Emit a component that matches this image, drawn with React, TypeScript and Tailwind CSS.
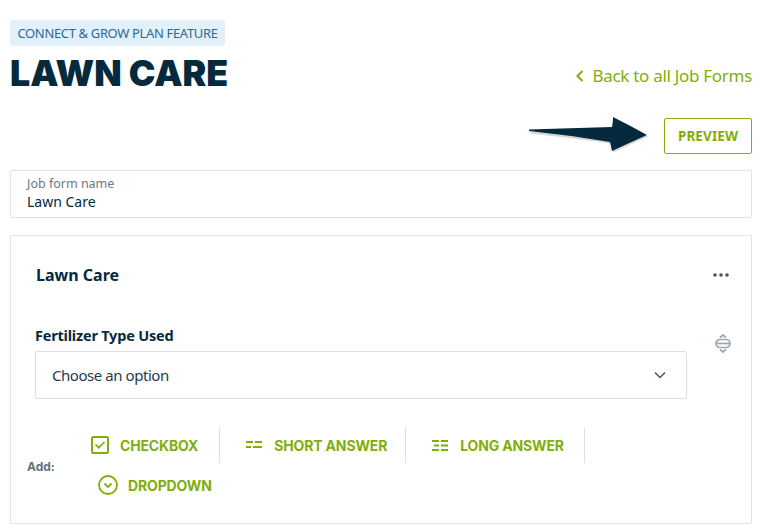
const SANS = "font-['Noto_Sans',sans-serif]";

const CheckboxIcon = () => (
  <svg width="18" height="18" viewBox="0 0 18 18" fill="none" stroke="#7fae0b" strokeWidth="2">
    <rect x="1" y="1" width="16" height="16" rx="1.5" />
    <path d="M4.5 8.5l3.2 3.2 5.8-5.7" strokeWidth="1.7" />
  </svg>
);

const ShortIcon = () => (
  <svg width="16" height="8" viewBox="0 0 16 8" fill="#7fae0b">
    <rect x="0" y="0" width="7" height="2" />
    <rect x="9" y="0" width="7" height="2" />
    <rect x="0" y="5" width="5" height="2" />
    <rect x="7" y="5" width="9" height="2" />
  </svg>
);

const LongIcon = () => (
  <svg width="16" height="11" viewBox="0 0 16 11" fill="#7fae0b">
    <rect x="0" y="0" width="7" height="2" />
    <rect x="9" y="0" width="7" height="2" />
    <rect x="2" y="4.5" width="5" height="2" />
    <rect x="9" y="4.5" width="7" height="2" />
    <rect x="0" y="9" width="7" height="2" />
    <rect x="9" y="9" width="7" height="2" />
  </svg>
);

const DropdownIcon = () => (
  <svg width="20" height="20" viewBox="0 0 20 20" fill="none" stroke="#7fae0b" strokeWidth="1.8">
    <circle cx="10" cy="10" r="9" />
    <path d="M6.5 8.5L10 12l3.5-3.5" />
  </svg>
);

const AddOption = ({ icon, label, divider, className }: { icon: React.ReactNode; label: string; divider?: boolean; className: string }) => (
  <div className={`flex h-9 items-center ${divider ? 'border-r border-[#e0e0e0]' : ''} ${className}`}>
    {icon}
    <span className="whitespace-nowrap font-['Inter',sans-serif] text-[14px] font-bold tracking-[-0.15px] text-[#7fae0b]">{label}</span>
  </div>
);

export default function App() {
  return (
    <div className={`h-[532px] w-[764px] overflow-hidden bg-white pl-[10px] pr-3 pt-5 text-[#05293d] ${SANS}`}>
      <div className="flex items-start justify-between">
        <div>
          <span className="block h-[26px] w-[215px] whitespace-nowrap rounded bg-[#e2f0fa] text-center text-[13px] tracking-[-0.35px] leading-[26px] text-[#2d6a94]">CONNECT &amp; GROW PLAN FEATURE</span>
          <h1 className="mt-[6px] whitespace-nowrap font-['Inter',sans-serif] text-[35.7px] font-black leading-[42px] tracking-[0px] text-[#05293d]">LAWN CARE</h1>
        </div>
        <a className="mt-[44px] flex items-center gap-[9px] text-[17px] tracking-[-0.3px] leading-6 text-[#7fae0b]">
          <svg width="8" height="12" viewBox="0 0 8 12" fill="none" stroke="#7fae0b" strokeWidth="2"><path d="M6.5 1L1.5 6l5 5" /></svg>
          Back to all Job Forms
        </a>
      </div>

      <div className="mt-[24px] flex items-start justify-end gap-4">
        <svg width="119" height="36" viewBox="0 0 119 36" className="-mt-[2px]">
          <path d="M0 14.5Q40 12 83 12 84 6 84 1 102 10 118 19 100 27 83 35 82 30 81 26 40 20 0 16Z" fill="#8a8a8a" opacity="0.35" transform="translate(1 1.5)" />
          <path d="M0 13.5Q40 12 83 11 84 6 84 1 102 10 118 19 100 27 83 35 82 30 81 26 40 19 0 15Z" fill="#05293d" />
        </svg>
        <button className="h-9 w-[88px] rounded-[2px] border border-[#7fae0b] text-[13.5px] font-bold tracking-[0.1px] text-[#7fae0b]">PREVIEW</button>
      </div>

      <div className="mt-4 h-12 rounded-[2px] border border-[#e3e3e3] px-4 pt-[5px]">
        <div className="text-[12.5px] leading-4 text-[#6b7885]">Job form name</div>
        <div className="text-[14px] leading-[19px] text-[#05293d]">Lawn Care</div>
      </div>

      <div className="mt-[17px] h-[289px] rounded-[2px] border border-[#e3e3e3] pl-[16px] pr-[22px]">
        <div className="mt-[28px] flex items-center justify-between pl-[9px]">
          <h2 className="text-[16px] font-bold leading-[22px]">Lawn Care</h2>
          <svg width="16" height="4" viewBox="0 0 16 4" fill="#44586a">
            <circle cx="2" cy="2" r="1.8" /><circle cx="8" cy="2" r="1.8" /><circle cx="14" cy="2" r="1.8" />
          </svg>
        </div>

        <div className="mt-[39px] flex items-start gap-[28px] pl-2">
          <div className="w-[652px] shrink-0">
            <label className="block text-[14.5px] font-bold tracking-[-0.2px] leading-5">Fertilizer Type Used</label>
            <div className="mt-[6px] flex h-12 items-center justify-between rounded-[2px] border border-[#dedede] pl-4 pr-5">
              <span className="text-[15px] tracking-[-0.45px] text-[#223b4b]">Choose an option</span>
              <svg width="12" height="8" viewBox="0 0 12 8" fill="none" stroke="#44586a" strokeWidth="1.5"><path d="M1 1.5l5 5 5-5" /></svg>
            </div>
          </div>
          <svg width="16" height="19" viewBox="0 0 16 19" fill="none" stroke="#9ba6ae" strokeWidth="1.7" className="mt-[9px] shrink-0">
            <path d="M5 3.5L8 1l3 2.5" />
            <rect x="1" y="5.5" width="14" height="8" rx="4" />
            <path d="M1 9.5h14" />
            <path d="M5 15.5L8 18l3-2.5" />
          </svg>
        </div>

        <div className="mt-[27px] flex items-center">
          <span className="w-[63px] pt-[4px] font-['Inter',sans-serif] text-[12px] font-bold text-[#5f7283]">Add:</span>
          <div className="flex flex-col gap-1 pt-px">
            <div className="flex">
              <AddOption icon={<CheckboxIcon />} label="CHECKBOX" divider className="gap-[11px] pl-[1px] pr-[21px]" />
              <AddOption icon={<ShortIcon />} label="SHORT ANSWER" divider className="gap-[12px] pl-[26px] pr-[18px]" />
              <AddOption icon={<LongIcon />} label="LONG ANSWER" divider className="gap-[12px] pl-[26px] pr-[20px]" />
            </div>
            <AddOption icon={<DropdownIcon />} label="DROPDOWN" className="gap-[10px] pl-[8px]" />
          </div>
        </div>
      </div>
    </div>
  );
}
